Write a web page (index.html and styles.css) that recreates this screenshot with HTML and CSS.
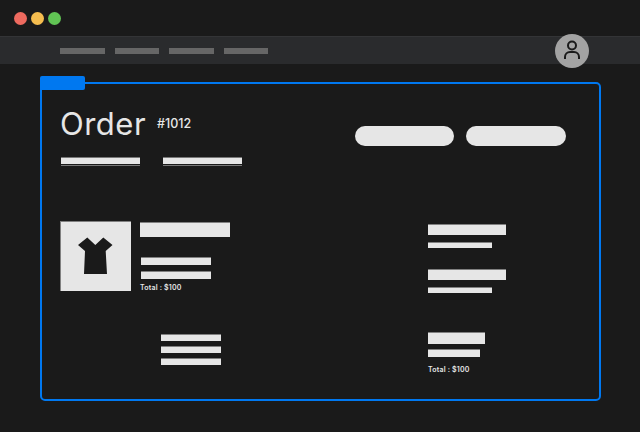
FILE: index.html
```html
<!DOCTYPE html>
<html lang="en">

<head>
    <meta charset="UTF-8">
    <meta name="viewport" content="width=device-width, initial-scale=1.0">
    <title>Order #1012</title>
    <link rel="stylesheet" href="styles.css">
</head>

<body>
    <!-- Window bar -->
    <div class="window-bar">
        <span class="dot dot-red"></span>
        <span class="dot dot-yellow"></span>
        <span class="dot dot-green"></span>
    </div>

    <!-- Nav -->
    <nav class="nav">
        <div class="nav-links">
            <span class="nav-link"></span>
            <span class="nav-link"></span>
            <span class="nav-link"></span>
            <span class="nav-link"></span>
        </div>
        <div class="avatar">
            <svg width="34" height="34" viewBox="0 0 34 34" fill="none" stroke="#1a1a1a" stroke-width="2">
                <circle cx="17" cy="11.5" r="4"></circle>
                <path d="M10 25v-2a5 5 0 0 1 5-5h4a5 5 0 0 1 5 5v2"></path>
            </svg>
        </div>
    </nav>

    <!-- Order card -->
    <main class="card">
        <span class="card-tab"></span>

        <div class="order-head">
            <div>
                <div class="order-title">
                    <h1>Order</h1>
                    <span class="order-number">#1012</span>
                </div>
                <div class="tabs">
                    <span class="tab"></span>
                    <span class="tab"></span>
                </div>
            </div>
            <div class="actions">
                <span class="pill pill-first"></span>
                <span class="pill"></span>
            </div>
        </div>

        <div class="order-body">
            <div class="order-left">
                <div class="product">
                    <div class="thumb">
                        <svg width="71" height="70" viewBox="0 0 71 70">
                            <path fill="#1a1a1a" d="M27.3 16.5 L18 24 L25 30 L24 53 L47 53 L45.7 30 L52.5 24 L43.3 16.5 L35.3 24 Z"></path>
                        </svg>
                    </div>
                    <div class="product-info">
                        <div class="bar product-name"></div>
                        <div class="bar product-line"></div>
                        <div class="bar product-line line-second"></div>
                        <div class="total">Total : $100</div>
                    </div>
                </div>
                <div class="summary-lines">
                    <div class="bar summary-line"></div>
                    <div class="bar summary-line"></div>
                    <div class="bar summary-line"></div>
                </div>
            </div>

            <div class="order-right">
                <div class="bar info-title"></div>
                <div class="bar info-sub"></div>
                <div class="bar info-title second-block"></div>
                <div class="bar info-sub"></div>
                <div class="bar pay-title"></div>
                <div class="bar pay-sub"></div>
                <div class="total total-right">Total : $100</div>
            </div>
        </div>
    </main>
</body>

</html>
```

FILE: styles.css
```css
/* Global Styles */
body {
    margin: 0;
    background-color: #1a1a1a;
    font-family: "Inter", "Liberation Sans", sans-serif;
    color: #e6e6e6;
}

/* Window bar */
.window-bar {
    display: flex;
    gap: 4px;
    height: 36px;
    padding: 12px 0 0 14px;
    box-sizing: border-box;
}

.dot {
    width: 13px;
    height: 13px;
    border-radius: 50%;
}

.dot-red {
    background-color: #ee6a5f;
}

.dot-yellow {
    background-color: #f5bd4f;
}

.dot-green {
    background-color: #61c454;
}

/* Nav */
.nav {
    display: flex;
    justify-content: space-between;
    align-items: center;
    height: 28px;
    padding: 0 51px 0 60px;
    box-sizing: border-box;
    background-color: #2a2b2d;
    border-top: 1px solid #333436;
}

.nav-links {
    display: flex;
    gap: 10px;
    margin-top: 1px;
}

.nav-link {
    width: 44.5px;
    height: 6px;
    background-color: #666;
}

.avatar {
    width: 34px;
    height: 34px;
    margin-top: 1px;
    border-radius: 50%;
    background-color: #a3a3a3;
}

.avatar svg {
    display: block;
}

/* Order card */
.card {
    position: relative;
    width: 561px;
    height: 319px;
    margin: 18px 0 0 40px;
    padding: 0 33px 0 18px;
    box-sizing: border-box;
    border: 2px solid #0078f0;
    border-radius: 5px;
}

.card-tab {
    position: absolute;
    top: -8px;
    left: -2px;
    width: 45px;
    height: 14px;
    border-radius: 2px;
    background-color: #0078f0;
}

.order-head {
    display: flex;
    justify-content: space-between;
}

.order-title {
    display: flex;
    align-items: flex-start;
    gap: 11px;
    height: 73px;
}

.order-title h1 {
    margin: 0;
    padding-top: 20px;
    font-size: 31px;
    font-weight: 400;
    letter-spacing: 0.5px;
    line-height: 40px;
}

.order-number {
    padding-top: 32px;
    font-size: 12.5px;
    font-weight: 500;
    line-height: 16px;
}

.tabs {
    display: flex;
    gap: 23px;
    margin-left: 1px;
}

.tab {
    width: 79px;
    height: 7px;
    padding-bottom: 1px;
    background-color: #e6e6e6;
    background-clip: content-box;
    border-bottom: 1px solid #777;
    box-shadow: inset 0 1px 0 #777;
}

.actions {
    display: flex;
    gap: 12px;
    padding-top: 42px;
}

.pill {
    width: 100px;
    height: 20px;
    border-radius: 10px;
    background-color: #e6e6e6;
}

.pill-first {
    width: 99px;
}

/* Order body */
.order-body {
    display: flex;
    justify-content: space-between;
    margin-top: 55px;
}

.bar {
    background-color: #e6e6e6;
    box-shadow: inset 0 1px 0 #808080;
}

.order-left {
    width: 200px;
}

.product {
    display: flex;
    gap: 9px;
}

.thumb {
    width: 71px;
    height: 70px;
    background-color: #e6e6e6;
    box-shadow: inset 1px 1px 0 #808080;
}

.thumb svg {
    display: block;
}

.product-name {
    width: 90px;
    height: 15px;
    margin-top: 1px;
}

.product-line {
    width: 70px;
    height: 8px;
    margin: 20px 0 0 1px;
}

.line-second {
    margin-top: 6px;
}

.total {
    margin-top: 4px;
    font-size: 7px;
    font-weight: 600;
    letter-spacing: 0.2px;
    line-height: 10px;
}

.summary-lines {
    display: flex;
    flex-direction: column;
    gap: 5px;
    width: 60px;
    margin: 41px 0 0 101px;
}

.summary-line {
    height: 7px;
}

.order-right {
    width: 138px;
    padding-top: 3px;
}

.info-title {
    width: 78px;
    height: 11px;
}

.info-sub {
    width: 64px;
    height: 6px;
    margin-top: 7px;
}

.second-block {
    margin-top: 21px;
}

.pay-title {
    width: 57px;
    height: 12px;
    margin-top: 39px;
}

.pay-sub {
    width: 52px;
    height: 8px;
    margin-top: 5px;
}

.total-right {
    margin-top: 8px;
}
```
